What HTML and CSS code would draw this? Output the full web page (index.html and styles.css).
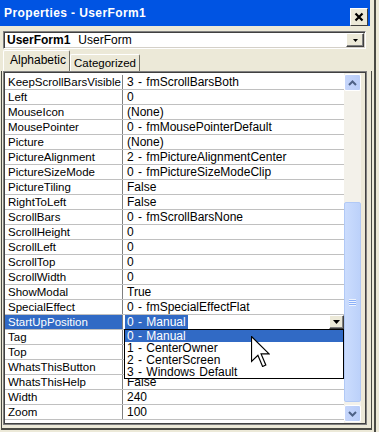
FILE: index.html
```html
<!DOCTYPE html>
<html lang="en">
<head>
  <meta charset="UTF-8" />
  <title>Properties - UserForm1</title>
  <link rel="stylesheet" href="styles.css">
</head>
<body>
  <div class="window">
    <div class="titlebar">
      <span class="title">Properties - UserForm1</span>
      <span class="close">
        <svg width="10" height="10" viewBox="0 0 10 10"><path d="M1.5 1.5L8.5 8.5M8.5 1.5L1.5 8.5" stroke="#000" stroke-width="2.2"/></svg>
      </span>
    </div>

    <div class="objcombo">
      <span class="objname">UserForm1</span>
      <span class="objtype">UserForm</span>
      <span class="ddbtn"><svg width="5" height="3" viewBox="0 0 5 3"><path d="M0 0H5L2.5 3z" fill="#000"/></svg></span>
    </div>

    <div class="tabs">
      <div class="tab active">Alphabetic</div>
      <div class="tab">Categorized</div>
    </div>

    <div class="page">
      <div class="grid">
        <div class="rows">
          <div class="row"><div class="name">KeepScrollBarsVisible</div><div class="val">3 - fmScrollBarsBoth</div></div>
          <div class="row"><div class="name">Left</div><div class="val">0</div></div>
          <div class="row"><div class="name">MouseIcon</div><div class="val">(None)</div></div>
          <div class="row"><div class="name">MousePointer</div><div class="val">0 - fmMousePointerDefault</div></div>
          <div class="row"><div class="name">Picture</div><div class="val">(None)</div></div>
          <div class="row"><div class="name">PictureAlignment</div><div class="val">2 - fmPictureAlignmentCenter</div></div>
          <div class="row"><div class="name">PictureSizeMode</div><div class="val">0 - fmPictureSizeModeClip</div></div>
          <div class="row"><div class="name">PictureTiling</div><div class="val">False</div></div>
          <div class="row"><div class="name">RightToLeft</div><div class="val">False</div></div>
          <div class="row"><div class="name">ScrollBars</div><div class="val">0 - fmScrollBarsNone</div></div>
          <div class="row"><div class="name">ScrollHeight</div><div class="val">0</div></div>
          <div class="row"><div class="name">ScrollLeft</div><div class="val">0</div></div>
          <div class="row"><div class="name">ScrollTop</div><div class="val">0</div></div>
          <div class="row"><div class="name">ScrollWidth</div><div class="val">0</div></div>
          <div class="row"><div class="name">ShowModal</div><div class="val">True</div></div>
          <div class="row"><div class="name">SpecialEffect</div><div class="val">0 - fmSpecialEffectFlat</div></div>
          <div class="row selected">
            <div class="name">StartUpPosition</div>
            <div class="val"><span class="seltext">0 - Manual</span><span class="cellbtn"><svg width="7" height="4" viewBox="0 0 7 4"><path d="M0 0H7L3.5 4z" fill="#000"/></svg></span></div>
          </div>
          <!-- values of these rows are hidden behind the open list -->
          <div class="row"><div class="name">Tag</div><div class="val"></div></div>
          <div class="row"><div class="name">Top</div><div class="val"></div></div>
          <div class="row"><div class="name">WhatsThisButton</div><div class="val"></div></div>
          <div class="row"><div class="name">WhatsThisHelp</div><div class="val">False</div></div>
          <div class="row"><div class="name">Width</div><div class="val">240</div></div>
          <div class="row"><div class="name">Zoom</div><div class="val">100</div></div>

          <div class="droplist">
            <div class="item current">0 - Manual</div>
            <div class="item">1 - CenterOwner</div>
            <div class="item">2 - CenterScreen</div>
            <div class="item">3 - Windows Default</div>
          </div>

          <svg class="cursor" width="19" height="31" viewBox="0 0 19 31">
            <path d="M0.5 0.5V25.5L6.9 19.2L11.6 30.5L14.8 29L10.1 17.9H18.1z" fill="#fff" stroke="#000" stroke-width="1.2"/>
          </svg>
        </div>

        <div class="vscroll">
          <div class="sbtn">
            <svg width="9" height="6" viewBox="0 0 9 6"><path d="M1 5L4.5 1.5L8 5" fill="none" stroke="#4d6185" stroke-width="2"/></svg>
          </div>
          <div class="track-top"></div>
          <div class="thumb">
            <div class="grip"></div>
          </div>
          <div class="track-bottom"></div>
          <div class="sbtn">
            <svg width="9" height="6" viewBox="0 0 9 6"><path d="M1 1L4.5 4.5L8 1" fill="none" stroke="#4d6185" stroke-width="2"/></svg>
          </div>
        </div>
      </div>
    </div>
  </div>
</body>
</html>
```

FILE: styles.css
```css
body {
  margin: 0;
  width: 379px;
  height: 432px;
  overflow: hidden;
  background-color: #ece9d8;
  font-family: "Liberation Sans", Arial, sans-serif;
  font-size: 11.5px;
  color: #000;
}
.window {
  width: 374px;
  height: 432px;
  border-right: 2px solid #4a4a44;
}

/* title bar */
.titlebar {
  width: 370px;
  height: 26px;
  box-sizing: border-box;
  padding-left: 4px;
  background-color: #0054e3;
  display: flex;
  justify-content: space-between;
}
.title {
  color: #fff;
  font-weight: bold;
  font-size: 12px;
  letter-spacing: 0.4px;
  line-height: 26px;
}
.close {
  align-self: flex-end;
  width: 18px;
  height: 18px;
  margin-right: 2px;
  box-sizing: border-box;
  background-color: #ece9d8;
  border: 1px solid;
  border-color: #fff #404040 #404040 #fff;
  display: flex;
  align-items: center;
  justify-content: center;
}

/* object combo */
.objcombo {
  margin: 5px 0 0 3px;
  width: 363px;
  height: 18px;
  box-sizing: border-box;
  background-color: #fff;
  border: 1px solid;
  border-color: #808080 #fff #fff #808080;
  box-shadow: inset 1px 1px 0 #404040, inset -1px -1px 0 #d4d0c8;
  display: flex;
  align-items: center;
  padding: 1px 1px 1px 3px;
}
.objname {
  font-weight: bold;
  font-size: 12px;
}
.objtype {
  margin-left: 8px;
  font-size: 12px;
}
.ddbtn {
  margin-left: auto;
  width: 18px;
  height: 14px;
  box-sizing: border-box;
  background-color: #ece9d8;
  border: 1px solid;
  border-color: #fff #404040 #404040 #fff;
  box-shadow: inset -1px -1px 0 #808080;
  display: flex;
  align-items: center;
  justify-content: center;
}

/* tabs */
.tabs {
  display: flex;
  align-items: flex-end;
  height: 21px;
  margin: 1px 0 0 3px;
}
.tab {
  box-sizing: border-box;
  height: 17px;
  line-height: 16px;
  width: 70px;
  padding-left: 3px;
  border: 1px solid;
  border-bottom: none;
  border-color: #fff #716f64 transparent #fff;
  border-radius: 2px 2px 0 0;
  white-space: nowrap;
}
.tab.active {
  height: 21px;
  line-height: 19px;
  width: 67px;
  padding-left: 6px;
  font-size: 12px;
}

/* property grid */
.page {
  margin-left: 1px;
  width: 371px;
  box-sizing: border-box;
  border-left: 1px solid #4a4a44;
  border-right: 1px solid #4a4a44;
  border-bottom: 2px solid #4a4a44;
  padding: 0 0 3px 1px;
}
.grid {
  width: 364px;
  height: 354px;
  box-sizing: border-box;
  border: 1px solid #808080;
  box-shadow: inset 1px 1px 0 #404040, inset -1px -1px 0 #404040;
  padding: 1px 4px 1px 1px;
  display: flex;
}
.rows {
  position: relative;
  width: 339px;
  padding-top: 2px;
  background-color: #fff;
}
.row {
  display: flex;
  height: 15px;
  box-sizing: border-box;
  border-bottom: 1px solid #c0c0c0;
  line-height: 14px;
  white-space: nowrap;
}
.name {
  width: 118px;
  box-sizing: border-box;
  padding-left: 3px;
  border-right: 1px solid #808080;
}
.val {
  flex: 1;
  padding-left: 4px;
  display: flex;
  font-size: 12px;
  word-spacing: 1px;
}
.row.selected .name {
  background-color: #316ac5;
  color: #fff;
}
.seltext {
  background-color: #316ac5;
  color: #fff;
  margin-left: -2px;
  padding: 0 2px;
}
.cellbtn {
  margin-left: auto;
  width: 15px;
  height: 14px;
  box-sizing: border-box;
  background-color: #ece9d8;
  border: 1px solid;
  border-color: #fff #404040 #404040 #fff;
  box-shadow: inset -1px -1px 0 #808080;
  display: flex;
  align-items: center;
  justify-content: center;
}

/* open dropdown */
.droplist {
  position: absolute;
  left: 119px;
  top: 256px;
  width: 220px;
  box-sizing: border-box;
  border: 1px solid #000;
  background-color: #fff;
  font-size: 12px;
  word-spacing: 1px;
}
.item {
  height: 12px;
  line-height: 12px;
  padding-left: 2px;
  white-space: nowrap;
}
.item.current {
  background-color: #316ac5;
  color: #fff;
}
.cursor {
  position: absolute;
  left: 246px;
  top: 263px;
}

/* scroll bar */
.vscroll {
  width: 17px;
  display: flex;
  flex-direction: column;
  padding: 1px 0;
  background-color: #f3f1ea;
}
.sbtn {
  height: 17px;
  box-sizing: border-box;
  border: 1px solid #fff;
  border-radius: 2px;
  background: linear-gradient(to right, #c6d6fb, #b9cdf8);
  display: flex;
  align-items: center;
  justify-content: center;
}
.track-top {
  height: 111px;
}
.track-bottom {
  flex: 1;
}
.thumb {
  height: 200px;
  box-sizing: border-box;
  border: 1px solid #b1c9f6;
  border-radius: 2px;
  background: linear-gradient(to right, #cbdcfd, #bcd1fa);
  display: flex;
  align-items: center;
  justify-content: center;
}
.grip {
  width: 7px;
  height: 7px;
  background: repeating-linear-gradient(to bottom, #eef4fe 0, #eef4fe 1px, #8cb0f8 1px, #8cb0f8 2px);
}
```
